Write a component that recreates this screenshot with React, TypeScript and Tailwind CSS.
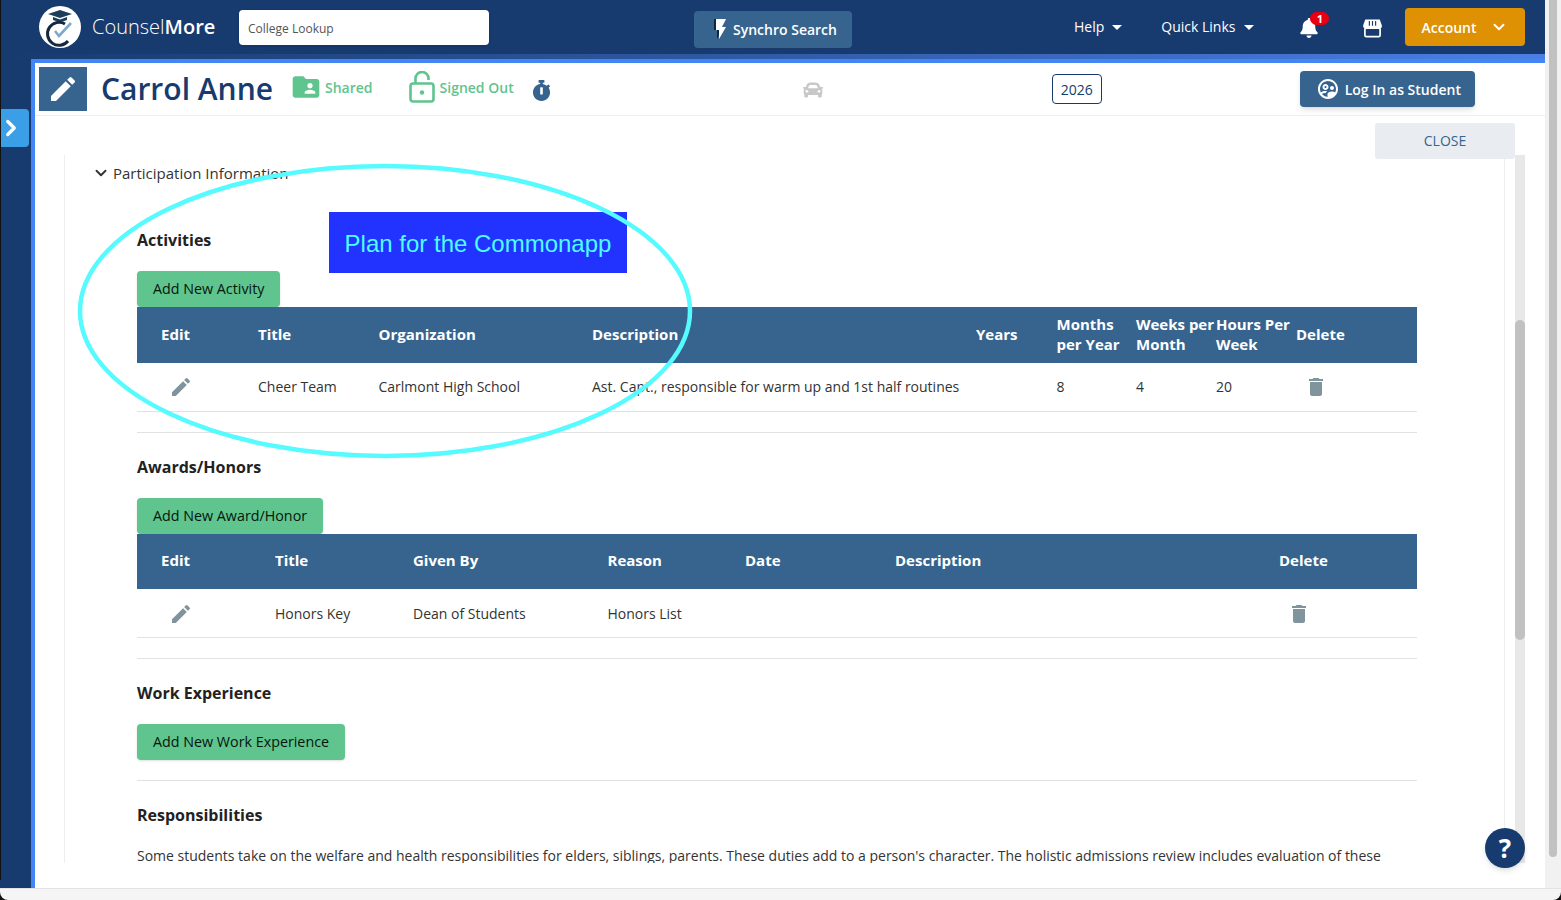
import React from "react";
import { ChevronDown, ChevronRight } from "lucide-react";
import { FaBell, FaCar, FaStopwatch } from "react-icons/fa";
import { MdDelete, MdEdit, MdFlashOn, MdFolderShared, MdOutlineSupervisedUserCircle } from "react-icons/md";

const Caret = () => (
  <span className="inline-block w-0 h-0 mt-[2px] border-x-[5px] border-x-transparent border-t-[5px] border-t-white" />
);

const Logo = () => (
  <svg viewBox="0 0 42 44" className="w-[42px] h-[44px] shrink-0">
    <circle cx="21" cy="22" r="21" fill="#fff" />
    <path d="M9 9 L21 5 L33 9 L21 13 Z" fill="#1d3d5c" />
    <path d="M14 12 V15 Q21 18 28 15 V12 L21 14.5 Z" fill="#1d3d5c" />
    <path d="M26 19 A11.5 11.5 0 1 0 29 36" fill="none" stroke="#14293f" strokeWidth="3" />
    <path d="M16 26 L20 31 L32 18" fill="none" stroke="#7fa8c9" strokeWidth="2.6" />
  </svg>
);

const StoreIcon = () => (
  <svg viewBox="0 0 20 20" className="ml-[45px] mt-[2px] w-[19px] h-[19px]" fill="none" stroke="#fff" strokeWidth="1.8">
    <path d="M3 1.5 H17 L19 7 Q19 9.5 16.5 9.5 Q14 9.5 13.3 7.6 Q12.5 9.5 10 9.5 Q7.5 9.5 6.7 7.6 Q6 9.5 3.5 9.5 Q1 9.5 1 7 Z" fill="#fff" />
    <path d="M6.7 2 V7 M10 2 V7 M13.3 2 V7" stroke="#173a6f" strokeWidth="1.2" />
    <rect x="2" y="9.5" width="16" height="9" rx="1.5" />
  </svg>
);

const LockIcon = () => (
  <svg viewBox="0 0 26 32" className="w-[26px] h-[32px]" fill="none" stroke="currentColor" strokeWidth="2.6">
    <rect x="1.5" y="12.5" width="23" height="18" rx="2.5" />
    <path d="M6.5 12.5 V7.5 a6.5 6.5 0 0 1 13 0 V9" />
    <circle cx="13" cy="21.5" r="2.2" fill="currentColor" stroke="none" />
  </svg>
);

const TopBar = () => (
  <header className="h-[54px] shrink-0 bg-[#173a6f] flex items-center pl-[39px] text-white">
    <Logo />
    <div className="ml-[11px] text-[20px] font-light w-[147px]">
      Counsel<span className="font-semibold">More</span>
    </div>
    <div className="w-[250px] h-[35px] bg-white rounded-[4px] flex items-center px-[9px] pt-[4px] text-[12px] text-[#555] shadow-sm">
      College Lookup
    </div>
    <button className="ml-[205px] mt-[4px] w-[158px] h-[37px] bg-[#36648e] rounded-[4px] flex items-center justify-center text-[14px] font-semibold">
      <MdFlashOn className="w-[24px] h-[24px] drop-shadow-[-2px_0_0_#10263f]" />
      Synchro Search
    </button>
    <div className="ml-[222px] pb-[2px] flex items-center gap-[8px] text-[14px] font-medium">
      Help <Caret />
    </div>
    <div className="ml-[39px] pb-[2px] flex items-center gap-[9px] text-[14px] font-medium">
      Quick Links <Caret />
    </div>
    <div className="relative ml-[46px] mt-[2px] w-[18px] h-[20px]">
      <FaBell className="w-[18px] h-[20px]" />
      <span className="absolute -top-[6px] left-[10px] w-[19px] h-[13px] rounded-full bg-[#e60012] text-[11px] leading-[13px] font-bold text-center">
        1
      </span>
    </div>
    <StoreIcon />
    <button className="ml-[23px] w-[120px] h-[38px] bg-[#dd9103] rounded-[4px] flex items-center pl-[16px] text-[14px] font-semibold">
      Account
      <ChevronDown className="ml-[13px] w-[18px] h-[18px]" strokeWidth={2.5} />
    </button>
  </header>
);

const RecordBar = () => (
  <div className="h-[53px] shrink-0 border-b border-[#eeeeee] flex items-center pl-[4px]">
    <div className="w-[48px] h-[44px] bg-[#36648e] flex items-center justify-center">
      <MdEdit className="w-[32px] h-[32px] text-white" />
    </div>
    <h1 className="ml-[14px] w-[190px] text-[30px] leading-none font-semibold text-[#173a6f]">
      Carrol Anne
    </h1>
    <div className="flex items-center text-[14px] font-semibold text-[#5fc48d] mt-[-4px]">
      <MdFolderShared className="w-[32px] h-[32px] -ml-[1px]" />
      <span className="ml-[3px]">Shared</span>
    </div>
    <div className="ml-[36px] flex items-center text-[14px] font-semibold text-[#5fc48d] mt-[-4px]">
      <LockIcon />
      <span className="ml-[5px]">Signed Out</span>
    </div>
    <FaStopwatch className="ml-[18px] w-[19px] h-[21px] text-[#36648e] mt-[2px]" />
    <FaCar className="ml-[252px] w-[20px] h-[20px] text-[#c8c8c8] mt-[2px]" />
    <div className="ml-[229px] w-[50px] h-[30px] border border-[#173a6f] rounded-[4px] flex items-center justify-center text-[14px] text-[#173a6f]">
      2026
    </div>
    <button className="ml-[198px] w-[175px] h-[36px] bg-[#36648e] rounded-[4px] shadow-md flex items-center pl-[16px] text-[14px] font-semibold text-white">
      <MdOutlineSupervisedUserCircle className="w-[24px] h-[24px] mr-[5px]" />
      Log In as Student
    </button>
  </div>
);

const AddButton = ({ label }: { label: string }) => (
  <button className="h-[36px] px-[16px] bg-[#5fc48d] rounded-[4px] text-[14.3px] text-[#07160e] shadow-sm block">
    {label}
  </button>
);

const SectionTitle = ({ children }: { children: React.ReactNode }) => (
  <h2 className="text-[16px] leading-[22px] font-bold text-[#222]">{children}</h2>
);

const ActivitiesTable = () => (
  <div className="w-[1280px]">
    <div className="h-[56px] pb-[2px] bg-[#36648e] text-white text-[15px] leading-[20px] font-bold grid grid-cols-[97px_120.5px_213.5px_384px_80.5px_79.5px_80px_80px_1fr] items-center pl-[24px] whitespace-nowrap">
      <div>Edit</div>
      <div>Title</div>
      <div>Organization</div>
      <div>Description</div>
      <div>Years</div>
      <div>
        Months
        <br />
        per Year
      </div>
      <div>
        Weeks per
        <br />
        Month
      </div>
      <div>
        Hours Per
        <br />
        Week
      </div>
      <div>Delete</div>
    </div>
    <div className="h-[49px] pb-[2px] border-b border-[#e2e2e2] text-[14px] text-[#333] grid grid-cols-[97px_120.5px_213.5px_384px_80.5px_79.5px_80px_80px_1fr] items-center pl-[24px] whitespace-nowrap">
      <MdEdit className="w-[24px] h-[24px] text-[#7f949c] ml-[8px] mt-[2px]" />
      <div>Cheer Team</div>
      <div>Carlmont High School</div>
      <div>Ast. Capt., responsible for warm up and 1st half routines</div>
      <div />
      <div>8</div>
      <div>4</div>
      <div>20</div>
      <MdDelete className="w-[24px] h-[24px] text-[#7f949c] ml-[8px] mt-[2px]" />
    </div>
  </div>
);

const HonorsTable = () => (
  <div className="w-[1280px]">
    <div className="h-[55px] pb-[2px] bg-[#36648e] text-white text-[15px] font-bold grid grid-cols-[114px_138px_194.5px_137.5px_150px_384px_1fr] items-center pl-[24px] whitespace-nowrap">
      <div>Edit</div>
      <div>Title</div>
      <div>Given By</div>
      <div>Reason</div>
      <div>Date</div>
      <div>Description</div>
      <div>Delete</div>
    </div>
    <div className="h-[49px] border-b border-[#e2e2e2] text-[14px] text-[#333] grid grid-cols-[114px_138px_194.5px_137.5px_150px_384px_1fr] items-center pl-[24px] whitespace-nowrap">
      <MdEdit className="w-[24px] h-[24px] text-[#7f949c] ml-[8px] mt-[2px]" />
      <div>Honors Key</div>
      <div>Dean of Students</div>
      <div>Honors List</div>
      <div />
      <div />
      <MdDelete className="w-[24px] h-[24px] text-[#7f949c] ml-[8px] mt-[2px]" />
    </div>
  </div>
);

const Content = () => (
  <div className="flex-1 h-[708px] overflow-hidden border-x border-[#eeeeee] pl-[72px] pt-[8px]">
    <div className="flex items-center -ml-[44px] h-[20px] text-[15px] text-[#333]">
      <ChevronDown className="w-[18px] h-[18px] mr-[3px] -ml-[1px]" strokeWidth={2.5} />
      Participation Information
    </div>
    <div className="mt-[46px]">
      <SectionTitle>Activities</SectionTitle>
    </div>
    <div className="mt-[20px]">
      <AddButton label="Add New Activity" />
    </div>
    <ActivitiesTable />
    <div className="w-[1280px] border-t border-[#e2e2e2] mt-[20px]" />
    <div className="mt-[23px]">
      <SectionTitle>Awards/Honors</SectionTitle>
    </div>
    <div className="mt-[20px]">
      <AddButton label="Add New Award/Honor" />
    </div>
    <HonorsTable />
    <div className="w-[1280px] border-t border-[#e2e2e2] mt-[20px]" />
    <div className="mt-[23px]">
      <SectionTitle>Work Experience</SectionTitle>
    </div>
    <div className="mt-[20px]">
      <AddButton label="Add New Work Experience" />
    </div>
    <div className="w-[1280px] border-t border-[#e2e2e2] mt-[20px]" />
    <div className="mt-[23px]">
      <SectionTitle>Responsibilities</SectionTitle>
    </div>
    <p className="mt-[19px] w-[1280px] text-[14px] leading-[22px] text-[#333]">
      Some students take on the welfare and health responsibilities for elders, siblings, parents. These duties add to a person's character. The holistic admissions review includes evaluation of these
    </p>
  </div>
);

// drawn over the page by whoever marked up the screenshot
const Annotation = () => (
  <>
    <div className="absolute left-[329px] top-[212px] w-[298px] h-[61px] pt-[2px] bg-[#2233ff] flex items-center justify-center text-[24px] text-[#4ffcff] font-['Liberation_Sans',sans-serif]">
      Plan for the Commonapp
    </div>
    <svg className="absolute left-0 top-0 pointer-events-none" width="1561" height="900" fill="none">
      <ellipse cx="385" cy="311" rx="305" ry="145" stroke="#55fbff" strokeWidth="4.5" />
    </svg>
  </>
);

export default function App() {
  return (
    <div className="relative w-[1561px] h-[900px] overflow-hidden bg-[#111] font-['Open_Sans',sans-serif]">
      <div className="h-[888px] flex flex-col bg-[#173a6f]">
        <TopBar />
        <div className="flex-1 flex min-h-0">
          <div className="flex-1 flex flex-col min-w-0">
            <div className="h-[5px] shrink-0 bg-linear-to-r from-[#173a6f] to-[#4b7fe5]" />
            <div className="flex-1 flex min-h-0 ml-[31px] border-t-4 border-l-4 border-[#4285f4] bg-white">
              <div className="flex-1 flex flex-col min-w-0">
                <RecordBar />
                <div className="flex justify-end mr-[30px] mt-[7px] h-[36px] relative z-10">
                  <button className="w-[140px] h-[36px] pb-[2px] bg-[#e9edf1] rounded-[3px] text-[14px] text-[#36648e]">
                    CLOSE
                  </button>
                </div>
                <div className="flex ml-[29px] mr-[20px] -mt-[4px]">
                  <Content />
                  <div className="ml-[10px] w-[10px] h-[708px] bg-[#e8e8e8] pt-[165px]">
                    <div className="h-[320px] bg-[#c1c1c1] rounded-full" />
                  </div>
                </div>
              </div>
            </div>
          </div>
          <div className="w-[16px] bg-[#f1f1f1]" />
        </div>
      </div>
      <div className="h-[12px] bg-[#f5f5f5] border-t border-[#e2e2e2] rounded-b-[8px]" />

      {/* outer page scrollbar, runs up past the top bar */}
      <div className="absolute left-[1545px] top-0 w-[16px] h-[888px] bg-[#f1f1f1] pl-[4px]">
        <div className="w-[8px] h-[857px] bg-[#c1c1c1] rounded-b-full" />
      </div>

      {/* sliver of the desktop behind the window */}
      <div className="absolute left-0 top-0 w-[1px] h-[880px] bg-[#111]" />

      <button className="absolute left-[1px] top-[109px] w-[28px] h-[38px] bg-[#3b9fe8] rounded-r-[4px] flex items-center text-white">
        <ChevronRight className="w-[26px] h-[26px] -ml-[3px]" strokeWidth={3} />
      </button>

      <button className="absolute left-[1485px] top-[828px] w-[40px] h-[40px] rounded-full bg-[#173a6f] text-white text-[26px] font-bold leading-[40px] text-center shadow-md">
        ?
      </button>

      <Annotation />
    </div>
  );
}
